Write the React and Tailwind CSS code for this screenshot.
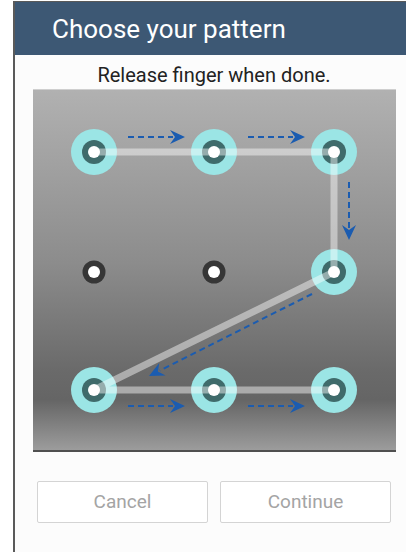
const DOTS = [
  [61, 62], [181, 62], [301, 62],
  [61, 182], [181, 182], [301, 182],
  [61, 300], [181, 300], [301, 300],
];

const PATH = [0, 1, 2, 5, 6, 7, 8];

function Arrow({ x1, y1, x2, y2 }) {
  const ang = Math.atan2(y2 - y1, x2 - x1);
  const len = 15;
  const w = 7;
  const bx = x2 - Math.cos(ang) * len;
  const by = y2 - Math.sin(ang) * len;
  const px = -Math.sin(ang) * w;
  const py = Math.cos(ang) * w;
  return (
    <g>
      <line x1={x1} y1={y1} x2={bx + Math.cos(ang) * 3} y2={by + Math.sin(ang) * 3} stroke="#1b5cb0" strokeWidth="2" strokeDasharray="6 4" />
      <polygon
        points={`${x2},${y2} ${bx + px},${by + py} ${bx + Math.cos(ang) * 5},${by + Math.sin(ang) * 5} ${bx - px},${by - py}`}
        fill="#1b5cb0"
      />
    </g>
  );
}

function PatternPad() {
  const active = new Set(PATH);
  return (
    <svg width="363" height="360" viewBox="0 0 363 360" className="block">
      {DOTS.map(([x, y], i) =>
        active.has(i) ? (
          <circle key={`o${i}`} cx={x} cy={y} r="23" fill="#9be5e5" />
        ) : null
      )}
      {DOTS.map(([x, y], i) => (
        <circle key={`r${i}`} cx={x} cy={y} r={active.has(i) ? 12 : 11.5} fill={active.has(i) ? '#3f6b6b' : '#363636'} />
      ))}
      <polyline
        points={PATH.map((i) => DOTS[i].join(',')).join(' ')}
        fill="none"
        stroke="#ffffff"
        strokeOpacity="0.45"
        strokeWidth="7"
        strokeLinejoin="round"
      />
      {DOTS.map(([x, y], i) => (
        <circle key={`c${i}`} cx={x} cy={y} r="6" fill="#ffffff" />
      ))}
      <Arrow x1={95} y1={47} x2={152} y2={47} />
      <Arrow x1={215} y1={47} x2={272} y2={47} />
      <Arrow x1={316} y1={92} x2={316} y2={150} />
      <Arrow x1={279} y1={204} x2={116} y2={286} />
      <Arrow x1={95} y1={316} x2={152} y2={316} />
      <Arrow x1={215} y1={316} x2={272} y2={316} />
    </svg>
  );
}

export default function App() {
  return (
    <div className="h-[552px] w-[406px] overflow-hidden bg-white font-['Roboto',sans-serif] pl-[13px] pt-px">
      <div className="flex h-full flex-col border-l-2 border-t border-[#5a5a5a] bg-[#fcfcfc]">
        <header className="flex h-[53px] items-center bg-[#3d5874] pl-[37px]">
          <h1 className="text-[26px] leading-none text-white">Choose your pattern</h1>
        </header>
        <p className="mt-[10px] pl-[7px] text-center text-[20px] leading-none text-[#222]">Release finger when done.</p>
        <div className="ml-[18px] mt-[4px] w-[363px] border-t border-[#cfcfcf] border-b-2 border-b-[#505050] bg-[linear-gradient(to_bottom,#b1b1b1_0%,#8c8c8c_48%,#6a6a6a_78%,#656565_86%,#9c9c9c_100%)]">
          <PatternPad />
        </div>
        <div className="mt-[29px] flex gap-[12px] pl-[22px]">
          <button className="h-[42px] w-[171px] rounded-[2px] border border-[#d4d4d4] bg-white text-[19px] text-[#a4a4a4]">Cancel</button>
          <button className="h-[42px] w-[171px] rounded-[2px] border border-[#d4d4d4] bg-white text-[19px] text-[#a4a4a4]">Continue</button>
        </div>
      </div>
    </div>
  );
}
